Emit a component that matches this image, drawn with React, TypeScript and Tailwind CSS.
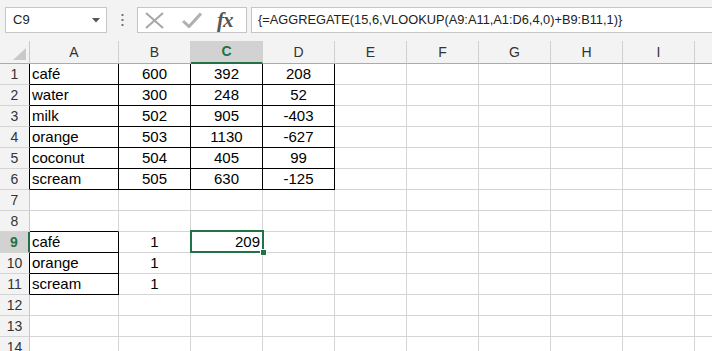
import React from "react";

const COLS = ["A", "B", "C", "D", "E", "F", "G", "H", "I"];
const COL_W = ["w-[89px]", "w-[72px]", "w-[72px]", "w-[72px]", "w-[72px]", "w-[72px]", "w-[72px]", "w-[72px]", "w-[72px]"];

type Cell = { v?: string | number; align?: "left" | "center" | "right"; box?: boolean; boxBottom?: boolean };

const table: (string | number)[][] = [
  ["café", 600, 392, 208],
  ["water", 300, 248, 52],
  ["milk", 502, 905, -403],
  ["orange", 503, 1130, -627],
  ["coconut", 504, 405, 99],
  ["scream", 505, 630, -125],
];

const lookup = [["café", 1], ["orange", 1], ["scream", 1]];

function rowCells(r: number): Cell[] {
  const cells: Cell[] = Array.from({ length: 10 }, () => ({}));
  if (r <= 6) {
    const d = table[r - 1];
    cells[0] = { v: d[0], align: "left", box: true };
    cells[1] = { v: d[1], align: "center", box: true };
    cells[2] = { v: d[2], align: "center", box: true };
    cells[3] = { v: d[3], align: "center", box: true };
  }
  if (r === 8) cells[0] = { boxBottom: true };
  if (r >= 9 && r <= 11) {
    const d = lookup[r - 9];
    cells[0] = { v: d[0], align: "left", box: true };
    cells[1] = { v: d[1], align: "center" };
  }
  if (r === 9) cells[2] = { v: 209, align: "right" };
  return cells;
}

function RowHeader({ r }: { r: number }) {
  const selected = r === 9;
  const blackEdge = (r >= 1 && r <= 6) || (r >= 10 && r <= 11);
  return (
    <div
      className={
        "w-[30px] shrink-0 flex items-center justify-center text-[14px] border-b border-b-[#d4d4d4] " +
        (selected
          ? "bg-[#d2d2d2] text-[#217346] font-bold border-r-2 border-r-[#217346]"
          : blackEdge
          ? "bg-[#f3f3f3] text-[#333] border-r border-r-black"
          : "bg-[#f3f3f3] text-[#333] border-r border-r-[#c8c8c8]")
      }
    >
      {r}
    </div>
  );
}

function GridRow({ r }: { r: number }) {
  const cells = rowCells(r);
  return (
    <div className="flex h-[21px]">
      <RowHeader r={r} />
      {cells.slice(0, 9).map((c, i) => (
        <div
          key={i}
          className={
            "relative shrink-0 flex items-center px-[2px] text-[15px] text-black border-r border-b " +
            COL_W[i] +
            " " +
            (c.box ? "border-r-black border-b-black " : c.boxBottom ? "border-r-[#d4d4d4] border-b-black " : "border-r-[#d4d4d4] border-b-[#d4d4d4] ") +
            (c.align === "center" ? "justify-center" : c.align === "right" ? "justify-end" : "justify-start")
          }
        >
          {c.v !== undefined && <span>{c.v}</span>}
          {r === 9 && i === 2 && (
            <div className="absolute z-10 left-[-1px] top-[-2px] w-[74px] h-[23px] border-2 border-[#217346]">
              <div className="absolute right-[-5px] bottom-[-5px] w-[7px] h-[7px] bg-[#217346] border border-white" />
            </div>
          )}
        </div>
      ))}
      <div className="flex-1 border-b border-b-[#d4d4d4]" />
    </div>
  );
}

function FormulaBar() {
  return (
    <div className="h-[41px] bg-[#f3f3f3] flex items-start pt-[7px] pl-[5px]">
      <div className="w-[102px] h-[26px] bg-white border border-[#c6c6c6] flex items-center justify-between pl-[7px] pr-[6px] text-[13px] text-[#222]">
        <span>C9</span>
        <svg width="8" height="5" viewBox="0 0 8 5">
          <path d="M0 0 L8 0 L4 4.5 Z" fill="#555" />
        </svg>
      </div>
      <div className="w-[30px] h-[26px] flex items-center justify-center">
        <svg width="3" height="12" viewBox="0 0 3 12">
          <rect x="0.5" y="0" width="2" height="2" fill="#777" />
          <rect x="0.5" y="5" width="2" height="2" fill="#777" />
          <rect x="0.5" y="10" width="2" height="2" fill="#777" />
        </svg>
      </div>
      <div className="w-[110px] h-[26px] bg-white border border-[#c6c6c6] flex items-center pl-[7px]">
        <svg width="19" height="17" viewBox="0 0 19 17" className="mr-[18px]">
          <path d="M1 1 L18 16 M18 1 L1 16" stroke="#a6a6a6" strokeWidth="2" fill="none" />
        </svg>
        <svg width="20" height="16" viewBox="0 0 20 16" className="mr-[15px]">
          <path d="M1 9 L7 14.5 L19 1.5" stroke="#b0b0b0" strokeWidth="3" fill="none" />
        </svg>
        <span className="font-['Liberation_Serif',serif] italic text-[21px] leading-none text-[#555] font-bold tracking-[-1px]">
          fx
        </span>
      </div>
      <div className="ml-[4px] flex-1 h-[26px] bg-white border border-r-0 border-[#c6c6c6] flex items-center pl-[6px] text-[12.8px] text-[#222] whitespace-nowrap overflow-hidden">
        {"{=AGGREGATE(15,6,VLOOKUP(A9:A11,A1:D6,4,0)+B9:B11,1)}"}
      </div>
    </div>
  );
}

function ColumnHeader() {
  return (
    <div className="flex h-[23px] bg-[#f3f3f3]">
      <div className="w-[30px] shrink-0 border-r border-r-[#c8c8c8] border-b border-b-[#ababab] flex items-end justify-end pr-[3px] pb-[3px]">
        <svg width="13" height="12" viewBox="0 0 13 12">
          <path d="M13 0 L13 12 L0 12 Z" fill="#c9c9c9" />
        </svg>
      </div>
      {COLS.map((c, i) => (
        <div
          key={c}
          className={
            "shrink-0 flex items-center justify-center text-[14px] border-r border-r-[#d0d0d0] " +
            COL_W[i] +
            " " +
            (c === "C"
              ? "bg-[#d2d2d2] text-[#217346] font-bold border-b-2 border-b-[#217346]"
              : "text-[#333] border-b border-b-[#ababab]")
          }
        >
          {c}
        </div>
      ))}
      <div className="flex-1 border-b border-b-[#ababab]" />
    </div>
  );
}

export default function App() {
  return (
    <div className="w-[712px] h-[351px] overflow-hidden bg-white font-['Liberation_Sans',Arial,sans-serif]">
      <FormulaBar />
      <ColumnHeader />
      {Array.from({ length: 14 }).map((_, i) => (
        <GridRow key={`row-${i}`} r={i + 1} />
      ))}
    </div>
  );
}
